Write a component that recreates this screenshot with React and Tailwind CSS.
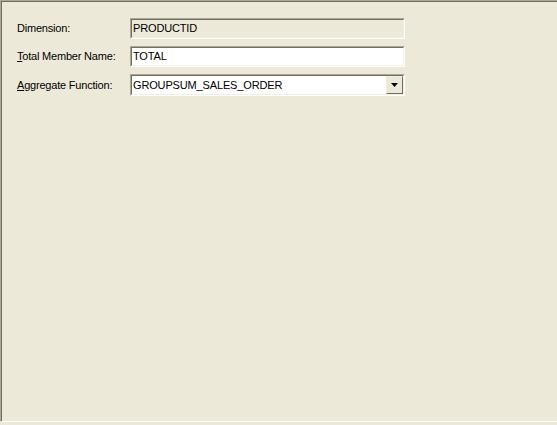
/**
 * Aggregate member properties panel (classic Windows dialog look)
 */
import React from "react";

const font = { fontFamily: '"Liberation Sans", Arial, sans-serif' };

// Two-line sunken edge, as the classic edit controls draw it
function Sunken({ children, className = "" }) {
  return (
    <div className="border border-t-[#aca899] border-l-[#aca899] border-b-white border-r-white">
      <div
        className={`border border-t-[#716f64] border-l-[#716f64] border-b-[#f1efe2] border-r-[#f1efe2] ${className}`}
      >
        {children}
      </div>
    </div>
  );
}

function Label({ children }) {
  return (
    <div className="w-[113px] text-[11px] tracking-[-0.2px] text-black">
      {children}
    </div>
  );
}

function DropArrow() {
  return (
    <div className="w-[17px] h-[18px] border border-t-[#f1efe2] border-l-[#f1efe2] border-b-[#716f64] border-r-[#716f64] bg-[#ece9d8] flex items-center justify-center">
      <svg width="7" height="4" viewBox="0 0 7 4">
        <path d="M0 0H7L3.5 4Z" fill="#000" />
      </svg>
    </div>
  );
}

export default function App() {
  return (
    <div className="w-[557px] h-[425px] bg-[#ece9d8]" style={font}>
      <div className="h-[422px] border-t border-l border-b border-t-[#aca899] border-l-[#aca899] border-b-white">
        <div className="h-full border-t border-l border-t-[#716f64] border-l-[#716f64] pl-[15px] pt-[16px] flex flex-col gap-[7px]">
          {/* Dimension (read only) */}
          <div className="flex items-center">
            <Label>Dimension:</Label>
            <div className="w-[275px]">
              <Sunken className="h-[19px] bg-[#ece9d8] flex items-center pl-[1px] text-[11px] tracking-[-0.15px] text-black">
                PRODUCTID
              </Sunken>
            </div>
          </div>

          {/* Total member name */}
          <div className="flex items-center">
            <Label>
              <span className="underline">T</span>otal Member Name:
            </Label>
            <div className="w-[275px]">
              <Sunken className="h-[19px] bg-white flex items-center pl-[1px] text-[11px] tracking-[-0.15px] text-black">
                TOTAL
              </Sunken>
            </div>
          </div>

          {/* Aggregate function combo */}
          <div className="flex items-center">
            <Label>
              <span className="underline">A</span>ggregate Function:
            </Label>
            <div className="w-[275px]">
              <Sunken className="h-[20px] bg-white flex items-center justify-between pl-[1px] text-[11px] tracking-[-0.15px] text-black">
                <span>GROUPSUM_SALES_ORDER</span>
                <DropArrow />
              </Sunken>
            </div>
          </div>
        </div>
      </div>
    </div>
  );
}
